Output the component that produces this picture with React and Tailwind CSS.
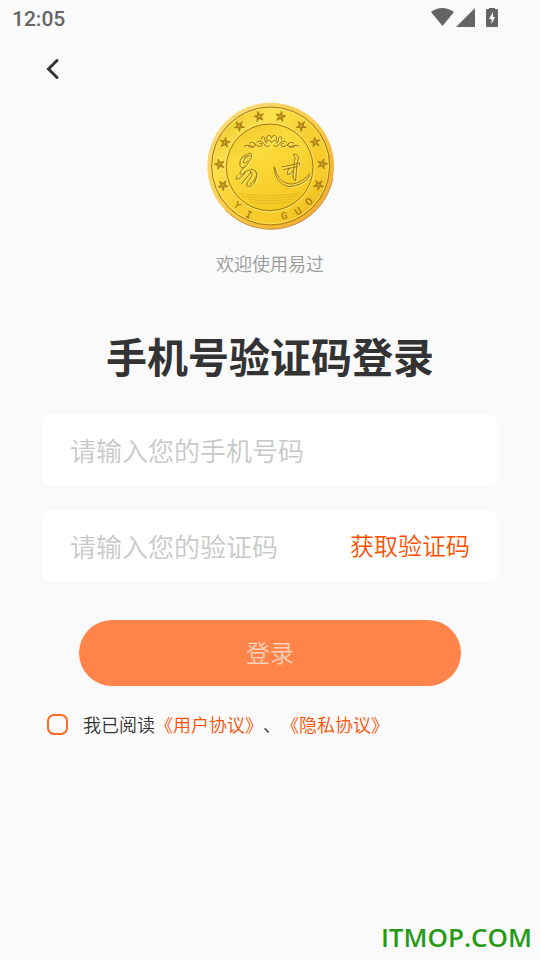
import { useState } from "react";

const STARS = [
  [178, 66], [243, 66], [305, 94], [347, 143], [368, 208],
  [357, 271], [119, 94], [76, 144], [60, 209], [70, 272],
];

const LETTERS = [
  ["Y", 113, 332, 40],
  ["I", 147, 360, 24],
  ["G", 254, 364, -15],
  ["U", 295, 350, -31],
  ["O", 328, 321, -47],
];

// five-pointed star, one tip facing away from the coin's centre
function starPoints(cx, cy) {
  const base = Math.atan2(cy - 214, cx - 213);
  return Array.from({ length: 10 }, (_, i) => {
    const r = i % 2 ? 6 : 16;
    const a = base + (i * Math.PI) / 5;
    return `${(cx + r * Math.cos(a)).toFixed(1)},${(cy + r * Math.sin(a)).toFixed(1)}`;
  }).join(" ");
}

function HalfOrnament() {
  return (
    <path d="M134 154 Q145 149 153 154 Q162 160 168 153 Q170 147 163 147 M150 145 Q160 140 166 147 Q172 157 182 156 Q190 154 187 147 Q182 143 179 148 M172 143 Q178 136 186 141 Q194 147 198 154 Q204 159 210 153 M186 134 Q183 127 190 126 Q198 128 196 136 Q194 143 202 146 M202 135 Q199 124 208 122 Q216 124 216 130 M200 139 Q208 134 216 142 M147 156 Q154 160 162 157" />
  );
}

function Engraving() {
  return (
    <>
      <HalfOrnament />
      <g transform="translate(432 0) scale(-1 1)">
        <HalfOrnament />
      </g>
      {/* left character */}
      <path d="M139 179 Q126 184 122 197 Q118 216 126 219 Q136 222 145 205 Q158 190 156 179 Q153 170 141 183 L130 202 Q136 210 144 199 M132 190 Q142 188 151 182 M140 213 Q123 225 121 235 Q119 244 131 237 Q146 225 151 226 Q158 229 146 243 L126 267 M137 231 Q130 248 115 253 Q105 257 112 243 M166 228 Q176 238 168 256 Q158 280 143 275 Q137 271 151 253 Q160 241 157 232 M154 223 Q171 225 171 240 Q168 258 151 269" />
      {/* right character */}
      <path d="M223 217 Q225 239 233 252 Q247 273 268 276 Q305 273 323 253 Q332 241 330 237 Q310 262 280 268 Q256 270 240 251 Q229 238 226 219 M282 179 Q293 177 297 189 L292 208 L288 259 Q281 254 280 245 L286 190 Z M247 217 Q266 214 300 205 Q304 210 294 216 Q273 220 253 225 M270 219 Q260 231 264 240 Q273 240 281 228" />
    </>
  );
}

function Coin() {
  return (
    <svg viewBox="19 22 384 384" className="size-32" role="img">
      <defs>
        <linearGradient id="rim" x1="0" y1="0" x2="1" y2="1">
          <stop offset="0" stopColor="#fbe08a" />
          <stop offset="0.5" stopColor="#f8cc48" />
          <stop offset="1" stopColor="#f0a22c" />
        </linearGradient>
        <linearGradient id="face" x1="0" y1="0" x2="1" y2="1">
          <stop offset="0" stopColor="#eabb20" />
          <stop offset="0.28" stopColor="#fce04a" />
          <stop offset="0.5" stopColor="#f7d033" />
          <stop offset="0.75" stopColor="#f6cb28" />
          <stop offset="1" stopColor="#e5ad1b" />
        </linearGradient>
        <linearGradient id="field" x1="0" y1="0" x2="0.5" y2="1">
          <stop offset="0" stopColor="#efc52b" />
          <stop offset="0.4" stopColor="#fbdb3d" />
          <stop offset="1" stopColor="#f5c923" />
        </linearGradient>
      </defs>
      <circle cx="213" cy="214" r="190" fill="url(#rim)" />
      <path d="M78 347 A190 190 0 0 0 400 250" fill="none" stroke="#b0711f" strokeWidth="2" />
      <circle cx="213" cy="214" r="177" fill="url(#face)" stroke="#a8780f" strokeWidth="3" />
      <circle cx="213" cy="214" r="173" fill="none" stroke="#fbe57a" strokeWidth="2" />
      <circle cx="210" cy="218" r="134" fill="none" stroke="#fbe572" strokeWidth="3" />
      <circle cx="210" cy="218" r="130" fill="url(#field)" stroke="#a47a0d" strokeWidth="3" />
      <path
        d="M120 296 Q210 309 300 296 M126 304 Q210 316 294 304 M138 312 Q210 324 284 312 M151 321 Q210 332 270 321"
        fill="none"
        stroke="#dcae20"
        strokeWidth="2"
      />
      {STARS.map(([x, y]) => (
        <g key={`${x}-${y}`} strokeLinejoin="round">
          <polygon points={starPoints(x + 2, y + 2)} fill="#fbe87e" />
          <polygon points={starPoints(x, y)} fill="#b98a14" stroke="#94690a" strokeWidth="2" />
          <circle cx={x - 1} cy={y - 1} r="3" fill="#d9b02c" />
        </g>
      ))}
      <g fill="none" strokeLinecap="round" strokeLinejoin="round">
        <g stroke="#fdeb86" strokeWidth="3" transform="translate(3 2)">
          <Engraving />
        </g>
        <g stroke="#9c760c" strokeWidth="3">
          <Engraving />
        </g>
      </g>
      {LETTERS.map(([ch, x, y, deg]) => (
        <text
          key={ch}
          x={x}
          y={y}
          dy="10"
          textAnchor="middle"
          transform={`rotate(${deg} ${x} ${y})`}
          fill="#94690a"
          fontSize="32"
          fontFamily="Liberation Mono, monospace"
        >
          {ch}
        </text>
      ))}
    </svg>
  );
}

function StatusBar() {
  return (
    <div className="flex h-[38px] items-center justify-between pr-10 pl-3 text-[#656565]">
      <span className="font-[Roboto,sans-serif] text-[21px] leading-9 font-medium">12:05</span>
      <svg viewBox="0 1 70 22" className="h-[22px] w-[70px]" fill="currentColor" aria-hidden="true">
        <path d="M1 5 Q12 -3 24 5 L12.500 19 Z" />
        <path d="M45 0 V19 H26 Z" transform="translate(0 1)" />
        <path
          fillRule="evenodd"
          d="M59 0 H65 V2 H67 Q68 2 68 3 V19 Q68 20 67 20 H57 Q56 20 56 19 V3 Q56 2 57 2 H59 Z M63 5 L59 12 H61.500 V17 L65 10 H63 Z"
        />
      </svg>
    </div>
  );
}

export default function App() {
  const [phone, setPhone] = useState("");
  const [code, setCode] = useState("");
  const [agreed, setAgreed] = useState(false);

  return (
    <div className="flex min-h-screen flex-col bg-[#fafafa] font-['Noto_Sans_CJK_SC',sans-serif] font-[350] text-[#333333]">
      <StatusBar />

      <nav className="flex h-16 items-center px-10 pb-1">
        <button type="button" aria-label="返回" className="flex size-6 items-center justify-center">
          <svg viewBox="0 0 24 24" className="size-6" fill="none" stroke="#333333" strokeWidth="3" strokeLinecap="round">
            <path d="M17 4.500 L8.500 13 L17 21.500" />
          </svg>
        </button>
      </nav>

      <form className="flex flex-col px-[42px]" onSubmit={(e) => e.preventDefault()}>
        <div className="flex flex-col items-center">
          <Coin />
          <p className="mt-5 text-lg leading-[26px] text-[#999999]">欢迎使用易过</p>
          <h1 className="mt-12 text-[41px] leading-[62px] font-bold">手机号验证码登录</h1>
        </div>

        <div className="mt-7 flex flex-col gap-6">
          <div className="flex h-[72px] items-center rounded-[10px] bg-white px-7 pb-0.5">
            <input
              type="tel"
              aria-label="手机号码"
              placeholder="请输入您的手机号码"
              value={phone}
              onChange={(e) => setPhone(e.target.value)}
              className="h-full min-w-0 flex-1 text-[26px] outline-none placeholder:text-[#c8c8c8]"
            />
          </div>
          <div className="flex h-[72px] items-center rounded-[10px] bg-white px-7 pb-0.5">
            <input
              type="text"
              aria-label="验证码"
              placeholder="请输入您的验证码"
              value={code}
              onChange={(e) => setCode(e.target.value)}
              className="h-full min-w-0 flex-1 text-[26px] outline-none placeholder:text-[#c8c8c8]"
            />
            <button type="button" className="shrink-0 text-2xl text-[#ff5000]">
              获取验证码
            </button>
          </div>
        </div>

        <button
          type="submit"
          className="mx-[37px] mt-[38px] h-[66px] rounded-full bg-[#ff844a] pb-0.5 text-2xl text-[#ffd0b8]"
        >
          登录
        </button>

        <div className="mt-6 flex items-center gap-[15px] px-[5px] text-lg leading-7 [text-spacing-trim:space-all]">
          <input
            id="agree"
            type="checkbox"
            checked={agreed}
            onChange={(e) => setAgreed(e.target.checked)}
            className="size-[21px] shrink-0 appearance-none rounded-[7px] border-2 border-[#ff6a26] checked:bg-[#ff5000]"
          />
          <div>
            <label htmlFor="agree">我已阅读</label>
            <a href="#terms" className="text-[#ff5000]">《用户协议》</a>、
            <a href="#privacy" className="text-[#ff5000]">《隐私协议》</a>
          </div>
        </div>
      </form>

      <footer className="mt-auto px-2 pb-1 text-right font-['Open_Sans',sans-serif] text-[26px] leading-[38px] font-semibold text-[#279a15]">
        ITMOP.COM
      </footer>
    </div>
  );
}
